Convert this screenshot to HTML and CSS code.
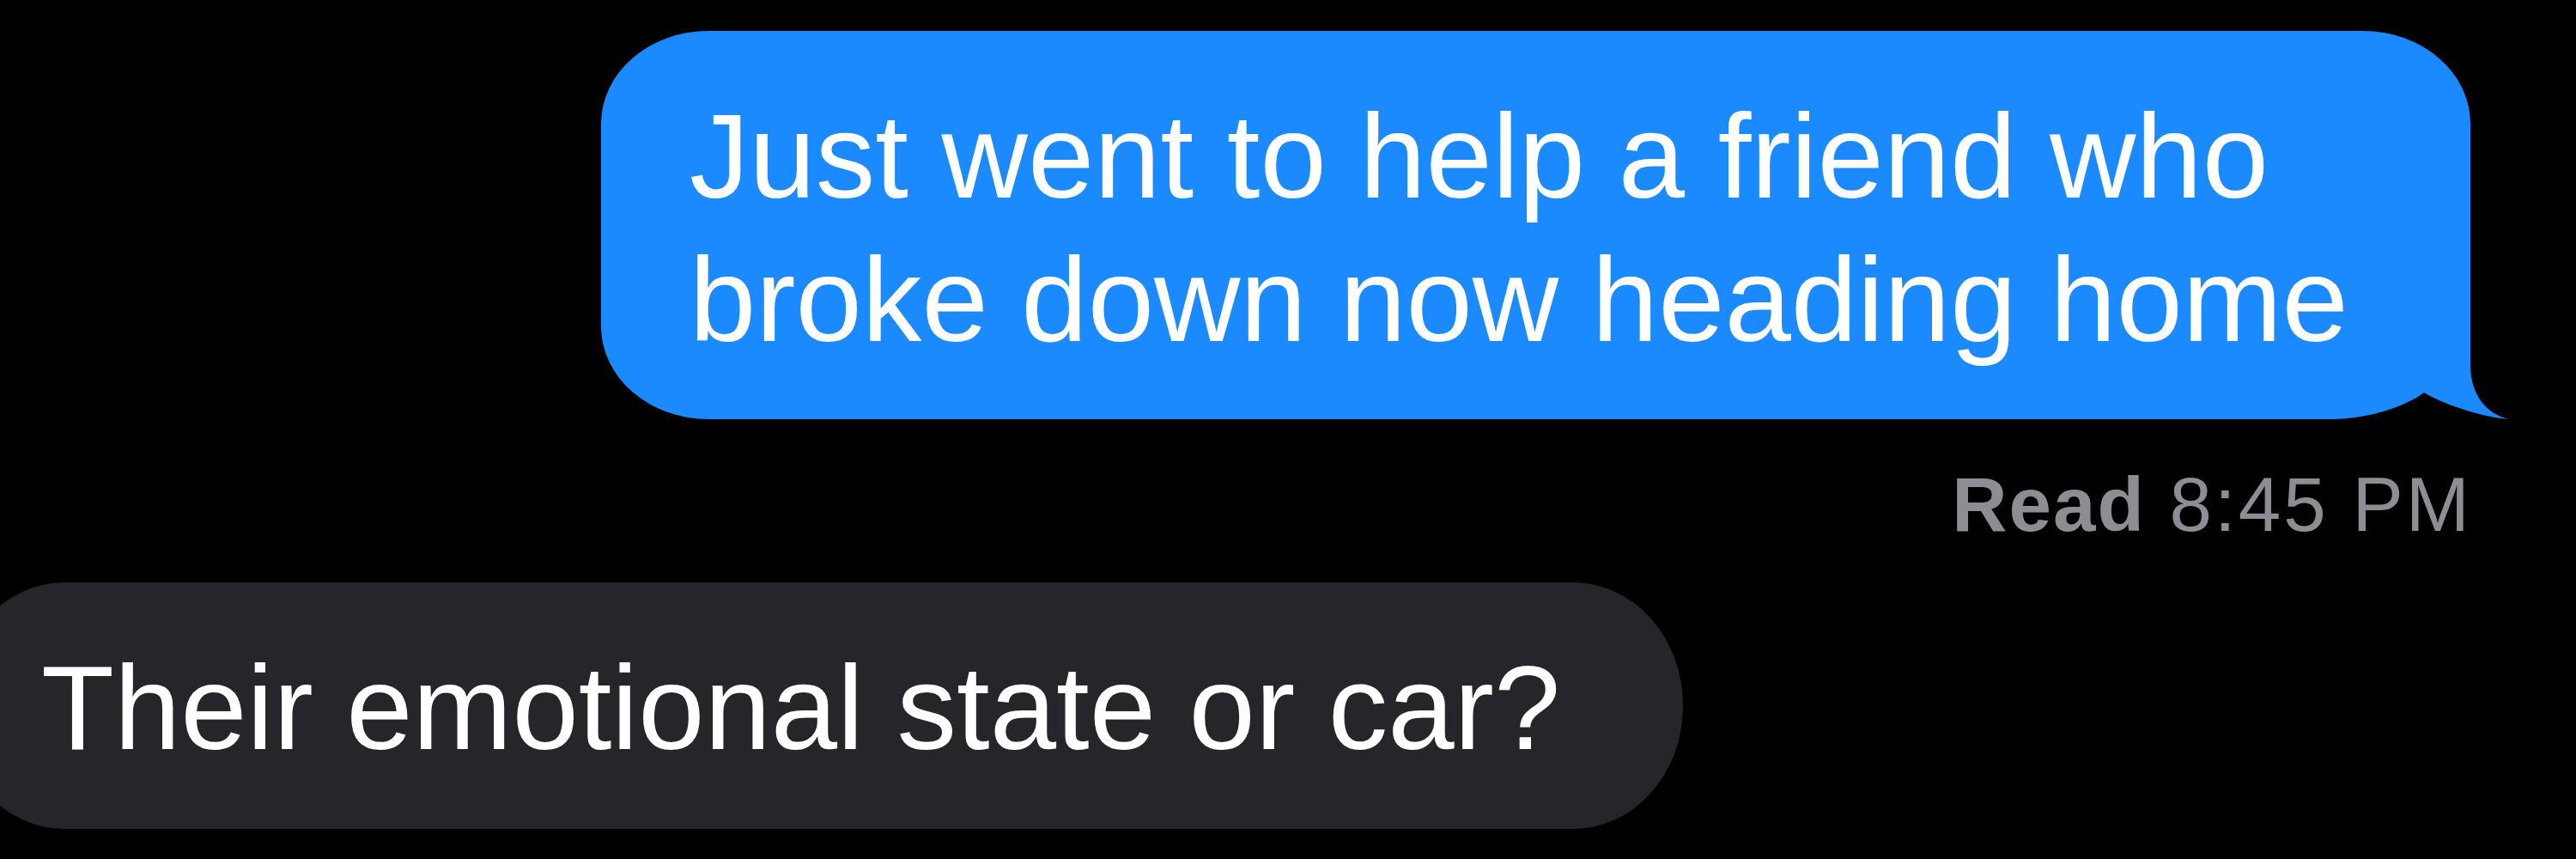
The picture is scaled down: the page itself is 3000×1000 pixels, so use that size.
FILE: index.html
```html
<!DOCTYPE html>
<html lang="en">
<head>
<meta charset="utf-8">
<title>Messages</title>
<link rel="stylesheet" href="styles.css">
</head>
<body>
<main class="thread">
  <div class="bubble sent">Just went to help a friend who<br>broke down now heading home<svg class="tail" viewBox="0 0 222 110" xmlns="http://www.w3.org/2000/svg"><path class="tail-blue" d="M160 0 L177 0 L177 49 C178 82 195 103 221 110 L160 110 Z"/><path class="tail-notch" d="M0 110 L20 110 C70 108 105 92 123 79 C150 95 195 108 221 110 L222 110 Z"/></svg></div>
  <div class="receipt"><b>Read</b> 8:45 PM</div>
  <div class="bubble recv">Their emotional state or car?</div>
</main>
</body>
</html>
```
FILE: styles.css
```css
html, body {
  margin: 0;
  padding: 0;
  background: #000;
}
body {
  width: 3000px;
  height: 1000px;
  overflow: hidden;
  font-family: "Liberation Sans", Arial, sans-serif;
}
.thread {
  display: flex;
  flex-direction: column;
  padding-top: 36px;
}
.bubble {
  box-sizing: border-box;
  font-size: 139px;
  line-height: 167px;
  color: #fff;
  white-space: nowrap;
  padding-top: 62px;
  padding-bottom: 56px;
}
.sent {
  position: relative;
  align-self: flex-end;
  margin-right: 123px;
  width: 2177px;
  padding-left: 103px;
  background: #1b8aff;
  border-radius: 125px 125px 0 125px / 108px 108px 0 108px;
}
.tail {
  position: absolute;
  right: -45px;
  bottom: 0;
  width: 222px;
  height: 110px;
  display: block;
}
.tail-blue { fill: #1b8aff; }
.tail-notch { fill: #000; }
.receipt {
  align-self: flex-end;
  margin: 49px 121px 0 0;
  font-size: 89px;
  line-height: 100px;
  letter-spacing: 3px;
  color: #8e8d93;
}
.receipt b { font-weight: 700; letter-spacing: 2px; }
.recv {
  align-self: flex-start;
  margin: 41px 0 0 -53px;
  width: 2013px;
  padding-left: 101px;
  padding-bottom: 58px;
  background: #262529;
  border-radius: 128px / 143px;
}
```
